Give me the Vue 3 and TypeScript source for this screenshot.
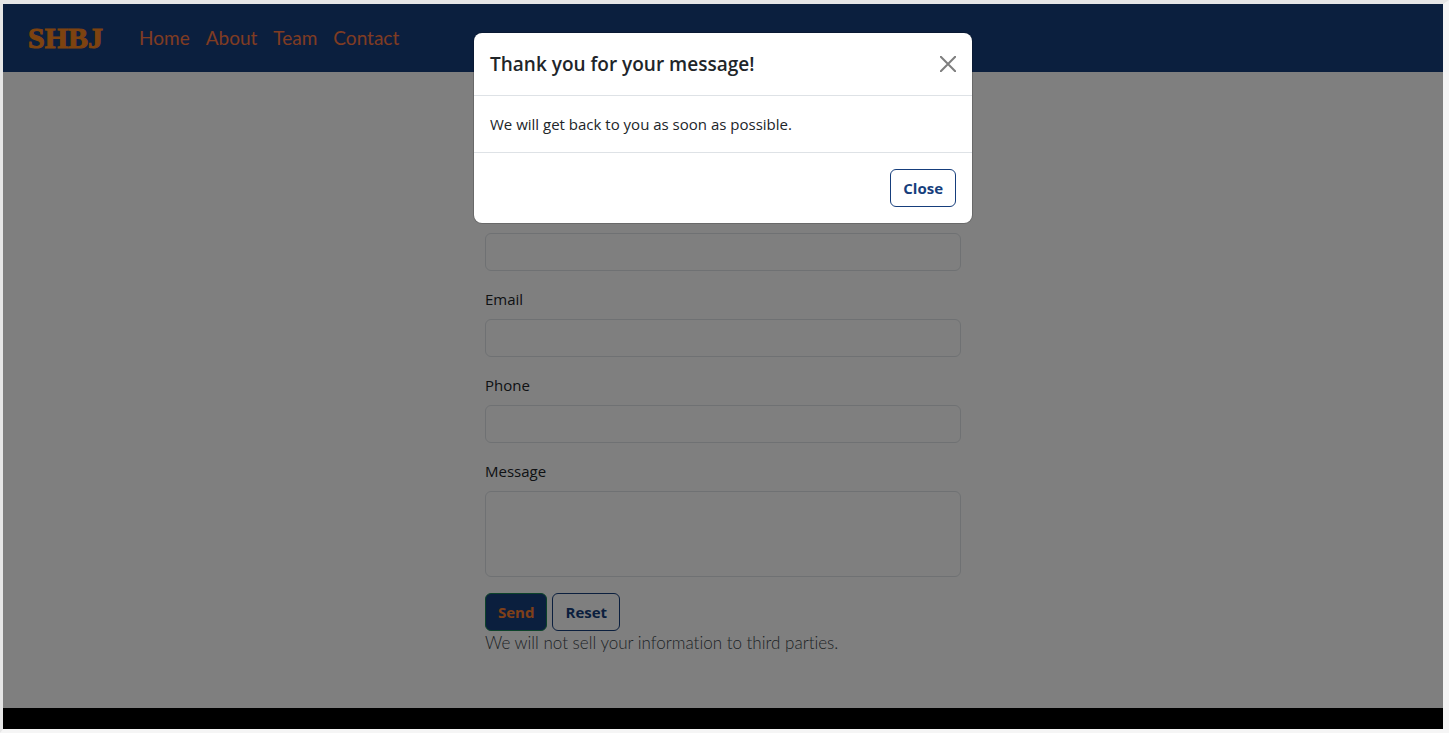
<script setup lang="ts">
import { ref } from 'vue'

interface Field {
  id: string
  label: string
  type: string
}

const links: string[] = ['Home', 'About', 'Team', 'Contact']
const fields: Field[] = [
  { id: 'name', label: 'Name', type: 'text' },
  { id: 'email', label: 'Email', type: 'email' },
  { id: 'phone', label: 'Phone', type: 'tel' },
]
const open = ref(true)
</script>

<template>
  <div class="frame">
    <div class="page">
      <header class="navbar">
        <a class="brand" href="#">SHBJ</a>
        <nav class="links">
          <a v-for="link in links" :key="link" :href="'#' + link.toLowerCase()">{{ link }}</a>
        </nav>
      </header>

      <main class="content">
        <form class="form" @submit.prevent="open = true">
          <div v-for="field in fields" :key="field.id" class="field">
            <label :for="field.id">{{ field.label }}</label>
            <input :id="field.id" :type="field.type" class="control" />
          </div>
          <div class="field">
            <label for="message">Message</label>
            <textarea id="message" class="control area"></textarea>
          </div>
          <div class="actions">
            <button type="submit" class="btn send">Send</button>
            <button type="reset" class="btn">Reset</button>
          </div>
          <p class="note">We will not sell your information to third parties.</p>
        </form>
      </main>

      <footer class="footer"></footer>

      <div v-if="open" class="backdrop">
        <section class="modal" role="dialog" aria-modal="true" aria-labelledby="modal-title">
          <div class="modal-header">
            <h2 id="modal-title">Thank you for your message!</h2>
            <button type="button" class="dismiss" aria-label="Close" @click="open = false">
              <svg viewBox="0 0 16 16" width="16" height="16" aria-hidden="true">
                <path d="M.8.8 15.2 15.2M15.2.8.8 15.2" fill="none" stroke="#000" stroke-width="2" stroke-linecap="round" />
              </svg>
            </button>
          </div>
          <p class="modal-body">We will get back to you as soon as possible.</p>
          <div class="modal-footer">
            <button type="button" class="btn" @click="open = false">Close</button>
          </div>
        </section>
      </div>
    </div>
  </div>
</template>

<style>
body {
  margin: 0;
  background: #f5f5f5;
}
</style>

<style scoped>
* {
  box-sizing: border-box;
}

.frame {
  display: flex;
  min-height: 100vh;
  border-style: solid;
  border-width: 4px 6px 4px 3px;
  border-color: #e6e6e6 #f5f5f5 #f5f5f5 #e6e6e6;
  font-family: "Open Sans", "Noto Sans", sans-serif;
  font-size: 15px;
  line-height: 24px;
  color: #212529;
}

.page {
  position: relative;
  display: flex;
  flex: 1;
  flex-direction: column;
  background: #fff;
}

.navbar {
  display: flex;
  align-items: center;
  gap: 36px;
  height: 68px;
  padding: 0 25px;
  background: #163e7c;
}

.brand {
  font-family: "Liberation Serif", serif;
  font-size: 30px;
  font-weight: 700;
  color: #fa8620;
  -webkit-text-stroke: 1px #fa8620;
  text-decoration: none;
}

.links {
  display: flex;
  gap: 16px;
  font-family: Lato, sans-serif;
  font-size: 19px;
  font-weight: 400;
}

.links a {
  color: #ff7844;
  text-decoration: none;
}

.content {
  flex: 1;
  padding: 129px 16px 0;
}

.form {
  max-width: 476px;
  margin: 0 auto;
}

.field {
  display: flex;
  flex-direction: column;
  gap: 8px;
  margin-bottom: 16px;
}

.control {
  width: 100%;
  height: 38px;
  padding: 6px 12px;
  border: 1px solid #dee2e6;
  border-radius: 6px;
  background: #fff;
  color: inherit;
  font: inherit;
}

.area {
  height: 86px;
  resize: none;
}

.actions {
  display: flex;
  gap: 5px;
}

.btn {
  height: 38px;
  padding: 0 12px;
  border: 1px solid #163e7c;
  border-radius: 6px;
  background: #fff;
  color: #163e7c;
  font: inherit;
  font-weight: 700;
}

.send {
  border-color: #198754;
  background: #163e7c;
  color: #ff8133;
}

.note {
  margin: 0;
  font-family: Lato, sans-serif;
  font-size: 17px;
  font-weight: 300;
  font-variant-ligatures: none;
  color: #40464c;
}

.footer {
  height: 21px;
  background: #000;
}

.backdrop {
  position: absolute;
  inset: 0;
  padding: 29px 16px;
  background: rgba(0, 0, 0, 0.5);
}

.modal {
  max-width: 498px;
  margin: 0 auto;
  border-radius: 8px;
  background: #fff;
  box-shadow: 0 0 0 1px rgba(0, 0, 0, 0.17);
}

.modal-header {
  display: flex;
  align-items: center;
  justify-content: space-between;
  height: 63px;
  padding: 0 16px;
  border-bottom: 1px solid #dee2e6;
}

.modal-header h2 {
  margin: 0;
  font-size: 19px;
  font-weight: 600;
}

.dismiss {
  display: flex;
  padding: 0;
  border: 0;
  background: none;
  opacity: 0.5;
}

.modal-body {
  margin: 0;
  padding: 16px;
}

.modal-footer {
  display: flex;
  justify-content: flex-end;
  padding: 16px;
  border-top: 1px solid #dee2e6;
}
</style>
